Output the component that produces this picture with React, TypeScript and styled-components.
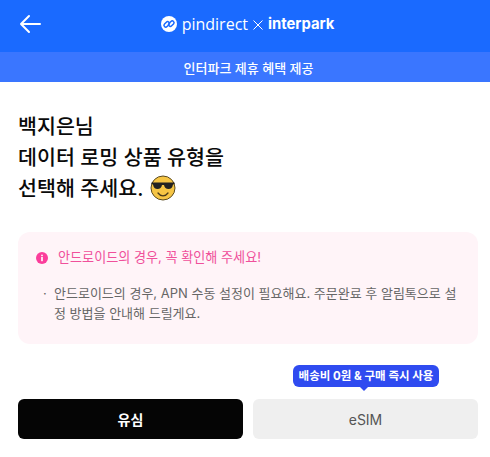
import React from 'react';
import styled, { createGlobalStyle } from 'styled-components';

const GlobalStyle = createGlobalStyle`
  html, body {
    margin: 0;
    padding: 0;
    background: #fff;
    font-family: Inter, "Noto Sans CJK KR", sans-serif;
  }
`;

const Page = styled.div`
  width: 490px;
  height: 457px;
  overflow: hidden;
  display: flex;
  flex-direction: column;
`;

const Header = styled.header`
  height: 52px;
  background: #1a6aff;
  display: flex;
  align-items: center;
  justify-content: center;
  position: relative;
`;

const BackButton = styled.button`
  position: absolute;
  left: 19px;
  top: 13px;
  width: 24px;
  height: 22px;
  padding: 0;
  background: none;
  border: none;
  display: flex;
`;

const Logo = styled.div`
  display: flex;
  align-items: center;
  color: #fff;
  margin-top: -5px;
  margin-left: 5px;
`;

const Pindirect = styled.span`
  font-family: "Open Sans", sans-serif;
  font-size: 16px;
  font-weight: 400;
  margin-left: 5px;
`;

const Times = styled.svg`
  margin: 2px 5px 0 5px;
`;

const Interpark = styled.span`
  font-family: Inter, sans-serif;
  font-size: 14.8px;
  font-weight: 700;
`;

const PromoBar = styled.div`
  height: 30px;
  padding-left: 7px;
  background: #3a76ff;
  color: #fff;
  font-size: 13px;
  font-weight: 500;
  display: flex;
  align-items: center;
  justify-content: center;
`;

const Main = styled.main`
  padding: 29px 12px 0 18px;
`;

const Title = styled.h1`
  margin: 0;
  font-size: 20.6px;
  line-height: 31px;
  font-weight: 500;
  color: #0a0a0a;
`;

const Emoji = styled.svg`
  vertical-align: -5px;
  margin-left: 1px;
`;

const Notice = styled.section`
  margin-top: 28px;
  height: 112px;
  box-sizing: border-box;
  padding: 16px 16px 0 18px;
  background: #fff4f8;
  border-radius: 12px;
`;

const NoticeHead = styled.div`
  display: flex;
  align-items: center;
  gap: 10px;
  color: #f0509b;
  font-size: 13.1px;
  line-height: 19px;
`;

const NoticeList = styled.ul`
  list-style: none;
  margin: 16px 0 0;
  padding: 0 0 0 18px;
  position: relative;
`;

const NoticeItem = styled.li`
  color: #666;
  font-size: 13px;
  line-height: 20px;
  &::before {
    content: '·';
    position: absolute;
    left: 7px;
  }
`;

const Choices = styled.div`
  margin-top: 55px;
  display: flex;
  gap: 10px;
  width: 460px;
`;

const Choice = styled.button<{ $active?: boolean }>`
  flex: 1;
  height: 40px;
  position: relative;
  border: none;
  border-radius: 6px;
  font-family: inherit;
  font-size: 14px;
  font-weight: ${(p) => (p.$active ? 700 : 400)};
  color: ${(p) => (p.$active ? '#fff' : '#555')};
  background: ${(p) => (p.$active ? '#050505' : '#efefef')};
`;

const Tip = styled.span`
  position: absolute;
  left: 40px;
  top: -34px;
  width: 146px;
  height: 22px;
  background: #2f4bf0;
  color: #fff;
  font-size: 11.5px;
  font-weight: 700;
  line-height: 22px;
  border-radius: 6px;
  text-align: center;
  white-space: nowrap;
  &::after {
    content: '';
    position: absolute;
    left: 67px;
    bottom: -4px;
    border-left: 4px solid transparent;
    border-right: 4px solid transparent;
    border-top: 4px solid #2f4bf0;
  }
`;

export default function App() {
  return (
    <Page>
      <GlobalStyle />
      <Header>
        <BackButton aria-label="뒤로">
          <svg width="24" height="22" viewBox="0 0 24 22" fill="none" stroke="#fff" strokeWidth="2" strokeLinecap="round" strokeLinejoin="round">
            <path d="M21 11H2M10 3l-8 8 8 8" />
          </svg>
        </BackButton>
        <Logo>
          <svg width="16" height="16" viewBox="0 0 16 16">
            <circle cx="8" cy="8" r="8" fill="#fff" />
            <g fill="none" stroke="#1a6aff" strokeWidth="1.5">
              <rect x="2.6" y="6.6" width="6.2" height="3.6" rx="1.8" transform="rotate(-45 5.7 8.4)" />
              <rect x="7.2" y="5.8" width="6.2" height="3.6" rx="1.8" transform="rotate(-45 10.3 7.6)" />
            </g>
          </svg>
          <Pindirect>pindirect</Pindirect>
          <Times width="10" height="10" viewBox="0 0 10 10" stroke="#fff" strokeWidth="1">
            <path d="M0.5 0.5l9 9M9.5 0.5l-9 9" />
          </Times>
          <Interpark>interpark</Interpark>
        </Logo>
      </Header>
      <PromoBar>인터파크 제휴 혜택 제공</PromoBar>
      <Main>
        <Title>
          백지은님
          <br />
          데이터 로밍 상품 유형을
          <br />
          선택해 주세요.{' '}
          <Emoji width="26" height="26" viewBox="0 0 26 26">
            <circle cx="13" cy="13" r="12" fill="#f6c544" stroke="#5a4a20" strokeWidth="1" />
            <path d="M1.5 7.500h23v1.500l-1.500.5c-.5 3-2 4.500-4.500 4.500-2.500 0-4-1.500-4.500-4h-2c-.5 2.500-2 4-4.500 4-2.500 0-4-1.500-4.500-4.500l-1.500-.5z" fill="#222" />
            <path d="M8 18c1.500 2 3.200 2.800 5 2.800s3.500-.8 5-2.800" fill="none" stroke="#4a3a1a" strokeWidth="1.300" strokeLinecap="round" />
          </Emoji>
        </Title>
        <Notice>
          <NoticeHead>
            <svg width="12" height="12" viewBox="0 0 12 12">
              <circle cx="6" cy="6" r="6" fill="#fb3d9b" />
              <rect x="5.200" y="5" width="1.600" height="4.200" fill="#fff" />
              <rect x="5.200" y="2.700" width="1.600" height="1.500" fill="#fff" />
            </svg>
            안드로이드의 경우, 꼭 확인해 주세요!
          </NoticeHead>
          <NoticeList>
            <NoticeItem>
              안드로이드의 경우, APN 수동 설정이 필요해요. 주문완료 후 알림톡으로 설정 방법을 안내해 드릴게요.
            </NoticeItem>
          </NoticeList>
        </Notice>
        <Choices>
          <Choice $active>유심</Choice>
          <Choice>
            <Tip>배송비 0원 &amp; 구매 즉시 사용</Tip>
            eSIM
          </Choice>
        </Choices>
      </Main>
    </Page>
  );
}
